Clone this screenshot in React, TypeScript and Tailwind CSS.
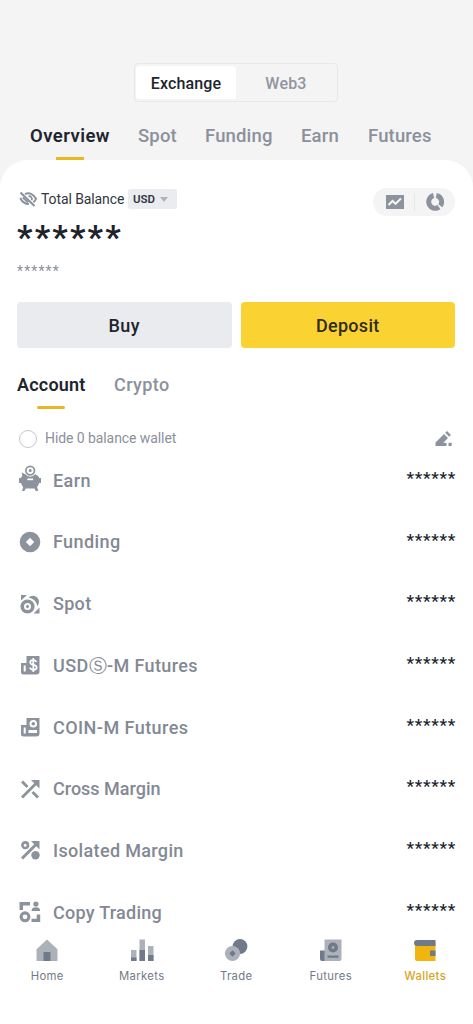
import type { ReactNode } from "react";

const icon = "h-6 w-6 shrink-0";

function PiggyIcon() {
  return (
    <svg viewBox="0 0 24 27" className="-mt-[3px] h-[27px] w-6 shrink-0" fill="#8d939d">
      <circle cx="12.2" cy="5.600" r="4.300" fill="none" stroke="#8d939d" strokeWidth="1.700" />
      <circle cx="12.2" cy="5.600" r="1.500" />
      <path d="M3.600 7.500l3.800 1.800a6.300 6.300 0 0 0 9.800 0c2 .7 3.500 2 4.100 3.700H23v5h-1.900c-.4 1.600-1.100 2.900-2.100 3.900l1.200 4h-2.400l-1.300-2.500h-8.800L6.400 25.900H4l1.200-4c-1.100-1-1.800-2.300-2.200-3.900H1v-5h2.100c.2-1 .6-1.800 1.200-2.500z" />
      <path d="M9.300 13.500h5.800v1.700H9.300z" fill="#fff" />
    </svg>
  );
}
function FundingIcon() {
  return (
    <svg viewBox="0 0 24 24" className={icon} fill="#8d939d">
      <path fillRule="evenodd" d="M12 1.700a10.300 10.300 0 1 0 0 20.600a10.300 10.300 0 1 0 0-20.600zM12 7.800l4.200 4.200-4.200 4.200-4.200-4.200z" />
    </svg>
  );
}
function SpotIcon() {
  return (
    <svg viewBox="0 0 24 24" className={icon} fill="#8d939d">
      <path d="M3 3h6L3 8.500zM21.500 21.500h-6l6-6z" />
      <path d="M10.500 5.500a6 6 0 1 1 8.700 8.700 10 10 0 0 0-8.700-8.700z" />
      <circle cx="9.500" cy="14.500" r="5.300" fill="none" stroke="#8d939d" strokeWidth="3.600" />
      <path d="M9.500 12.600l1.900 1.900-1.900 1.900-1.900-1.900z" />
    </svg>
  );
}
function UsdIcon() {
  return (
    <svg viewBox="0 0 24 24" className={icon} fill="#8d939d">
      <path d="M8.500 3h13v15.500a3 3 0 0 1-3 3H5.500A2.500 2.500 0 0 1 3 19V10h5.500z" />
      <path d="M5.700 12.500h2v6h-2z" fill="#fff" />
      <path d="M18.400 9c-.6-1.300-1.600-1.800-3.200-1.800-1.900 0-3 .8-3 2.200 0 3.300 6.500 1.600 6.500 4.900 0 1.600-1.300 2.500-3.300 2.500-1.700 0-3-.7-3.600-2.100M15.300 5v14" fill="none" stroke="#fff" strokeWidth="1.700" />
    </svg>
  );
}
function CoinIcon() {
  return (
    <svg viewBox="0 0 24 24" className={icon} fill="#8d939d">
      <path d="M8.500 3h13v15.500a3 3 0 0 1-3 3H5.500A2.500 2.500 0 0 1 3 19V10h5.500z" />
      <circle cx="15.300" cy="8.800" r="2.800" fill="none" stroke="#fff" strokeWidth="2" />
      <path d="M5.700 12.500h2v6h-2zM10.500 15h8.500v3h-8.500z" fill="#fff" />
    </svg>
  );
}
function CrossIcon() {
  return (
    <svg viewBox="0 0 24 24" className={icon} fill="#8d939d">
      <path d="M13 3h8.500v8.500z" />
      <path d="M18.500 6L4 20.500M4 4.500l5.500 5.500M14.500 15l5.500 5.500" fill="none" stroke="#8d939d" strokeWidth="2.900" />
    </svg>
  );
}
function IsolatedIcon() {
  return (
    <svg viewBox="0 0 24 24" className={icon} fill="#8d939d">
      <path d="M13 3h8.500v8.500z" />
      <path d="M18.500 6L4 20.500" fill="none" stroke="#8d939d" strokeWidth="3" />
      <circle cx="7.200" cy="7.200" r="2.800" fill="none" stroke="#8d939d" strokeWidth="2.600" />
      <circle cx="17.500" cy="17.300" r="4.200" />
    </svg>
  );
}
function CopyIcon() {
  return (
    <svg viewBox="0 0 24 24" className={icon} fill="#8d939d">
      <path d="M1.500 2H12v3.500H5v4.500H1.500zM13.500 11h8.700c0-2.800-1.700-3.800-4.300-3.800s-4.400 1-4.400 3.800z" />
      <circle cx="17.900" cy="4" r="2.600" />
      <circle cx="7" cy="16.800" r="3.900" fill="none" stroke="#8d939d" strokeWidth="3.100" />
      <path d="M18.700 14.500h3.500V22h-8.700v-3.200h5.200z" />
    </svg>
  );
}

const wallets: { name: string; label: ReactNode; spacing: string; icon: ReactNode }[] = [
  { name: "earn", label: "Earn", spacing: "tracking-[0.4px]", icon: <PiggyIcon /> },
  { name: "funding", label: "Funding", spacing: "tracking-[0.4px]", icon: <FundingIcon /> },
  { name: "spot", label: "Spot", spacing: "tracking-[0.3px]", icon: <SpotIcon /> },
  { name: "usd", label: "USDⓈ-M Futures", spacing: "tracking-[0.38px]", icon: <UsdIcon /> },
  { name: "coin", label: "COIN-M Futures", spacing: "tracking-[0.45px]", icon: <CoinIcon /> },
  { name: "cross", label: "Cross Margin", spacing: "tracking-[0px]", icon: <CrossIcon /> },
  { name: "isolated", label: "Isolated Margin", spacing: "tracking-[0.34px]", icon: <IsolatedIcon /> },
  { name: "copy", label: "Copy Trading", spacing: "tracking-[0.26px]", icon: <CopyIcon /> },
];

const navIcon = "h-6 w-6";
const nav: { label: string; active?: boolean; icon: ReactNode }[] = [
  {
    label: "Home",
    icon: (
      <svg viewBox="0 0 24 24" className={navIcon}>
        <path d="M12 1.500l10.500 9.700V23h-21V11.200z" fill="#adb1b9" />
        <path d="M8.500 14h7v9h-7z" fill="#717a89" />
      </svg>
    ),
  },
  {
    label: "Markets",
    icon: (
      <svg viewBox="0 0 24 24" className={navIcon}>
        <path d="M1 12h5.500v11H1zM9.500 1.500H15V23H9.500zM18 8h5.500v15H18z" fill="#adb1b9" />
        <path d="M1 19.500h5.500V23H1zM9.500 12H15v11H9.500zM18 17h5.500v6H18z" fill="#717a89" />
      </svg>
    ),
  },
  {
    label: "Trade",
    icon: (
      <svg viewBox="0 0 24 24" className={navIcon}>
        <circle cx="16" cy="8.500" r="7.400" fill="#717a89" />
        <circle cx="8.500" cy="15.500" r="7.600" fill="#adb1b9" />
        <path d="M8.500 12.300l3.200 3.200-3.200 3.200-3.200-3.200z" fill="#717a89" />
      </svg>
    ),
  },
  {
    label: "Futures",
    icon: (
      <svg viewBox="0 0 24 24" className={navIcon}>
        <path d="M1 12.500h5.500V23H3a2 2 0 0 1-2-2z" fill="#717a89" />
        <path d="M5.500 1.500h17V21a2 2 0 0 1-2 2h-15z" fill="#adb1b9" />
        <circle cx="14" cy="9.500" r="5" fill="#717a89" />
        <path d="M14 7.800l1.700 1.700-1.700 1.700-1.700-1.700z" fill="#adb1b9" />
        <path d="M8.500 17.500h11v2.300h-11z" fill="#717a89" />
      </svg>
    ),
  },
  {
    label: "Wallets",
    active: true,
    icon: (
      <svg viewBox="0 0 24 24" className={navIcon}>
        <path d="M2 4h20.500v19H4a2 2 0 0 1-2-2z" fill="#f0b50f" />
        <path d="M4 2h18.500v6H4a3 3 0 0 1 0-6zM17 12.500h5.500v5.500H17z" fill="#717a89" />
      </svg>
    ),
  },
];

export default function App() {
  return (
    <div className="flex h-[1024px] w-[473px] flex-col overflow-hidden bg-[#f4f4f4] font-['Roboto',sans-serif] text-[#20252d]">
      <header className="flex h-[160px] shrink-0 flex-col pt-[63px]">
        <div className="ml-[134px] flex h-[39px] w-[204px] rounded-[4px] border border-[#e8e8e9] px-px py-[2px] text-[16px] font-medium">
          <div className="flex w-[100px] items-center justify-center rounded-[3px] bg-white pt-[2px] tracking-[0.15px]">Exchange</div>
          <div className="flex flex-1 items-center justify-center pt-[2px] tracking-[0.2px] text-[#90959f]">Web3</div>
        </div>
        <nav className="flex h-[58px] pl-[30px] pt-[21px] text-[18.5px] leading-[27px] font-medium tracking-[0.15px] whitespace-nowrap text-[#8b919b]">
          <div className="flex w-[108px] flex-col text-[#20252d]">
            <span className="font-semibold tracking-[0.45px]">Overview</span>
            <span className="mt-[7px] ml-[26px] h-[3px] w-7 bg-[#eab721]" />
          </div>
          <span className="w-[67px]">Spot</span>
          <span className="w-[96px]">Funding</span>
          <span className="w-[67px]">Earn</span>
          <span>Futures</span>
        </nav>
      </header>

      <main className="flex h-[768px] shrink-0 flex-col overflow-hidden rounded-t-[28px] bg-white pr-[18px] pl-[17px]">
        <div className="flex h-[56px] shrink-0 items-start justify-between pt-[28px]">
          <div className="flex h-[22px] items-center">
            <svg viewBox="0 0 20 18" className="ml-[1px] h-[18px] w-5 shrink-0" fill="none" stroke="#8d939d">
              <path d="M2.500 2.500l14 13.500" strokeWidth="2.200" />
              <path d="M7 4.200C11 2 15.500 4 18 8.800c-.7 1.500-1.500 2.500-2.500 3.400M2.300 8c1.500 3.500 4.800 6 8.700 6" strokeWidth="2" />
              <path d="M10.500 6.300c2.400-.4 4 1.600 3.300 3.900M4.800 7.500l5.200 4.800" strokeWidth="1.800" />
            </svg>
            <span className="ml-[3px] w-[87px] pt-px text-[14px] tracking-[-0.1px] whitespace-nowrap text-[#31363f]">Total Balance</span>
            <div className="flex h-[20px] w-[49px] items-center rounded-[2px] bg-[#ebecef] pl-[5px]">
              <span className="w-[27px] pt-px text-[11.5px] font-semibold text-[#31363f]">USD</span>
              <svg viewBox="0 0 8 5" className="h-[5px] w-2"><path d="M0 0h8L4 5z" fill="#b0b4bb" /></svg>
            </div>
          </div>
          <div className="flex h-[28px] w-[82px] items-center rounded-full bg-[#f4f4f4]">
            <svg viewBox="0 0 18 14" className="ml-[13px] h-[14px] w-[18px]">
              <path d="M0 0h18v14H0z" fill="#8d939d" />
              <path d="M2.500 10l4-4 3 2.800 5.500-5.300" fill="none" stroke="#f5f5f5" strokeWidth="2" />
            </svg>
            <span className="ml-[10px] h-[18px] w-px bg-[#e5e6e8]" />
            <svg viewBox="0 0 18 18" className="ml-[11px] h-[18px] w-[18px]" fill="none" stroke="#8d939d" strokeWidth="5">
              <path d="M7.600 2.500A6.500 6.500 0 1 0 13 14.100" />
              <path d="M10.300 2.500a6.500 6.500 0 0 1 4 10.300" />
            </svg>
          </div>
        </div>
        <div className="h-[44px] shrink-0 text-[34px] leading-[43px] font-bold tracking-[2.200px] text-[#1d222b]">******</div>
        <div className="h-[42px] shrink-0 text-[14px] leading-[22px] tracking-[1.100px] text-[#8b919b]">******</div>
        <div className="grid h-[46px] shrink-0 grid-cols-2 gap-[9px] text-[18px] font-medium">
          <button className="rounded-[4px] bg-[#eaebef] tracking-[0.5px]">Buy</button>
          <button className="rounded-[4px] bg-[#fad333] tracking-[0.300px] text-[#302b1a]">Deposit</button>
        </div>
        <div className="flex h-[72px] shrink-0 pt-[23px] text-[18px] leading-[28px] font-medium">
          <div className="flex w-[97px] flex-col">
            <span className="font-semibold tracking-[0.2px]">Account</span>
            <span className="mt-[7px] ml-[20px] h-[3px] w-7 rounded-full bg-[#eab721]" />
          </div>
          <span className="tracking-[0.4px] text-[#8b919b]">Crypto</span>
        </div>
        <div className="flex h-[37px] shrink-0 items-center text-[14px] text-[#8b919b]">
          <span className="ml-[2px] h-[18px] w-[18px] rounded-full border border-[#c5c8ce]" />
          <span className="ml-[8px] tracking-[-0.080px]">Hide 0 balance wallet</span>
          <svg viewBox="0 0 18 17" className="mr-[2px] ml-auto h-[17px] w-[18px]" fill="#8d939d">
            <path d="M.5 16v-3.500L9 4l4 4-4.700 4.700H11.500V16zM10.200 2.800L12 1l4 4-1.800 1.800zM13.500 12.800h3.200V16h-3.200z" />
          </svg>
        </div>
        <div className="-mt-[7.600px] flex shrink-0 flex-col">
          {wallets.map((w) => (
            <div key={w.name} className="flex h-[61.700px] shrink-0 items-center pl-px text-[18px] font-medium">
              {w.icon}
              <span className={"ml-[11px] text-[#838994] " + w.spacing}>{w.label}</span>
              <span className="-mr-px mb-[3px] ml-auto text-[17px] tracking-[0.700px] text-[#20252d]">******</span>
            </div>
          ))}
        </div>
      </main>

      <footer className="flex h-[96px] shrink-0 bg-white pt-[10px]">
        {nav.map((n) => (
          <div key={n.label} className={"flex w-[94.500px] shrink-0 flex-col items-center gap-[7px] font-['Inter',sans-serif] text-[11.300px] leading-[14px] tracking-[0.35px] " + (n.active ? "font-medium text-[#d6a51b]" : "text-[#737a86]")}>
            {n.icon}
            <span>{n.label}</span>
          </div>
        ))}
      </footer>
    </div>
  );
}
